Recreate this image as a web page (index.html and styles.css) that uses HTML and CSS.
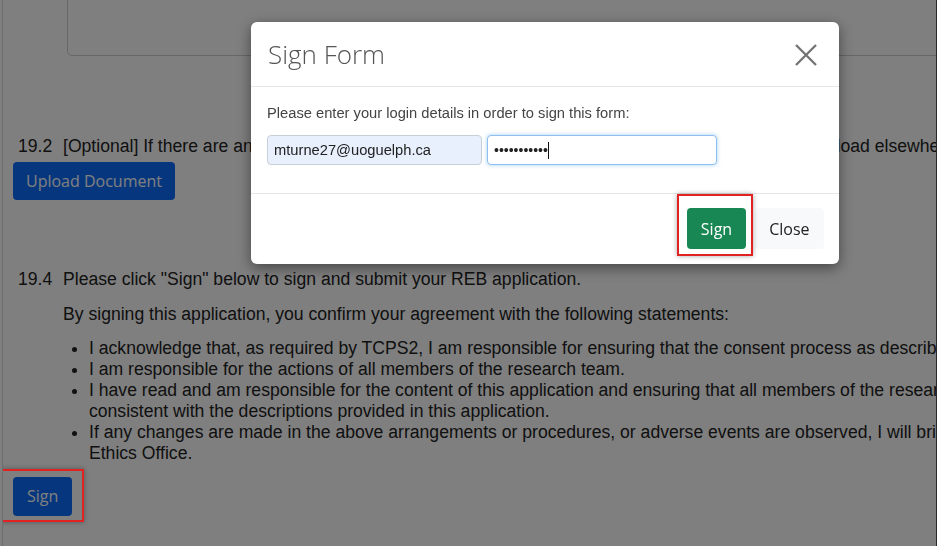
FILE: index.html
```html
<!DOCTYPE html>
<html lang="en">
<head>
<meta charset="utf-8">
<title>Sign Form</title>
<link rel="stylesheet" href="styles.css">
</head>
<body>
<div class="page">
  <div class="content">
    <div class="textbox"></div>

    <section class="q q-upload">
      <div class="q-row"><span class="q-num">19.2</span><span class="q-text">[Optional] If there are any further documents related to your application that you were not able to upload elsewhere in this application, please upload them here.</span></div>
      <button class="btn btn-primary">Upload Document</button>
    </section>

    <section class="q q-sign">
      <div class="q-row"><span class="q-num">19.4</span><span class="q-text">Please click "Sign" below to sign and submit your REB application.</span></div>
      <p class="q-body">By signing this application, you confirm your agreement with the following statements:</p>
      <ul class="q-list">
        <li>I acknowledge that, as required by TCPS2, I am responsible for ensuring that the consent process as described in this application is followed.</li>
        <li>I am responsible for the actions of all members of the research team.</li>
        <li>I have read and am responsible for the content of this application and ensuring that all members of the research team conduct the research in a manner consistent with the descriptions provided in this application.</li>
        <li>If any changes are made in the above arrangements or procedures, or adverse events are observed, I will bring these to the attention of the Research Ethics Office.</li>
      </ul>
      <div class="mark mark-page"><button class="btn btn-primary">Sign</button></div>
    </section>
  </div>
</div>

<div class="backdrop"></div>

<div class="modal">
  <div class="modal-header">
    <h4 class="modal-title">Sign Form</h4>
    <span class="modal-close" aria-label="Close">
      <svg width="22" height="22" viewBox="0 0 22 22"><path d="M1 1 L21 21 M21 1 L1 21" stroke="#737373" stroke-width="2.3" fill="none"/></svg>
    </span>
  </div>
  <div class="modal-body">
    <p class="modal-text">Please enter your login details in order to sign this form:</p>
    <div class="fields">
      <div class="field field-user">mturne27@uoguelph.ca</div>
      <div class="field field-pass">•••••••••••<span class="caret"></span></div>
    </div>
  </div>
  <div class="modal-footer">
    <div class="mark mark-modal"><button class="btn btn-success">Sign</button></div>
    <button class="btn btn-light">Close</button>
  </div>
</div>
</body>
</html>
```

FILE: styles.css
```css
html, body {
  margin: 0;
  padding: 0;
  height: 546px;
  overflow: hidden;
  background: #ffffff;
}

body {
  font-family: "Liberation Sans", Arial, sans-serif;
  font-size: 17.6px;
  line-height: 21px;
  color: #222222;
}

.page {
  margin-left: 2px;
  width: 933px;
  height: 546px;
  border-left: 1px solid #dcdcdc;
  border-right: 1px solid #555555;
  overflow: hidden;
}

.content {
  width: 1276px;
  padding-left: 10px;
}

.textbox {
  margin-left: 54px;
  height: 55px;
  border: 1px solid #cfcfcf;
  border-top: none;
  border-radius: 0 0 5px 5px;
}

.q-row {
  display: flex;
  padding-left: 5px;
  white-space: nowrap;
}

.q-num {
  width: 45px;
  flex: none;
}

.q-upload .q-row {
  margin-top: 80px;
}

.q-upload .btn {
  margin-top: 5px;
}

.q-sign .q-row {
  margin-top: 69px;
}

.q-body {
  margin: 14px 0 0 50px;
}

.q-list {
  margin: 13px 0 0 50px;
  padding-left: 26px;
}

.btn {
  display: block;
  font-family: "Open Sans", "Liberation Sans", sans-serif;
  font-size: 16px;
  line-height: 24px;
  padding: 7px 13px;
  border: none;
  border-radius: 4px;
  cursor: pointer;
}

.btn-primary {
  background: #0d6efd;
  color: #ffffff;
}

.mark {
  position: relative;
  display: inline-block;
}

.mark::after {
  content: "";
  position: absolute;
  border: 2px solid #e02222;
  box-shadow: 0 0 5px rgba(0, 0, 0, 0.35);
  z-index: 20;
}

.mark-page {
  margin-top: 13px;
}

.mark-page .btn {
  padding: 7px 14px 8px;
}

.mark-page::after {
  top: -8px;
  right: -12px;
  bottom: -6px;
  left: -13px;
}

.backdrop {
  position: fixed;
  inset: 0;
  background: rgba(0, 0, 0, 0.5);
  z-index: 10;
}

.modal {
  position: absolute;
  left: 251px;
  top: 22px;
  width: 588px;
  background: #ffffff;
  border-radius: 6px;
  box-shadow: 0 4px 14px rgba(0, 0, 0, 0.45);
  z-index: 11;
}

.modal-header {
  display: flex;
  justify-content: space-between;
  align-items: flex-start;
  height: 49px;
  padding: 15px 22px 0 17px;
  border-bottom: 1px solid #e6e6e6;
}

.modal-title {
  margin: 0;
  font-family: "Open Sans", sans-serif;
  font-weight: 300;
  font-size: 26px;
  line-height: 35px;
  color: #555555;
}

.modal-close {
  display: block;
  width: 22px;
  height: 22px;
  margin-top: 7px;
}

.modal-close svg {
  display: block;
}

.modal-body {
  padding: 16px 16px 28px;
  font-size: 14.7px;
  line-height: 20px;
}

.modal-text {
  margin: 0;
  color: #444444;
}

.fields {
  display: flex;
  gap: 5px;
  margin-top: 12px;
}

.field {
  box-sizing: border-box;
  height: 30px;
  padding: 4px 6px;
  border-radius: 4px;
  font-size: 14.7px;
  line-height: 20px;
  color: #222222;
}

.field-user {
  width: 215px;
  background: #e8f0fe;
  border: 1px solid #c9cfd8;
}

.field-pass {
  width: 230px;
  background: #ffffff;
  border: 1px solid #8fbef0;
  box-shadow: 0 0 4px rgba(102, 175, 233, 0.6);
  font-size: 14px;
}

.caret {
  display: inline-block;
  width: 1px;
  height: 17px;
  background: #111111;
  vertical-align: -4px;
}

.modal-footer {
  display: flex;
  justify-content: flex-end;
  align-items: center;
  gap: 9px;
  padding: 14px 15px 15px;
  border-top: 1px solid #e6e6e6;
}

.modal-footer .btn {
  height: 41px;
  padding: 0 13.5px;
}

.modal-footer .btn-light {
  padding: 0 14.5px;
}

.btn-success {
  background: #198754;
  color: #ffffff;
}

.btn-light {
  background: #f8f9fa;
  color: #222222;
}

.mark-modal::after {
  top: -14px;
  right: -7px;
  bottom: -7px;
  left: -10px;
}
```
